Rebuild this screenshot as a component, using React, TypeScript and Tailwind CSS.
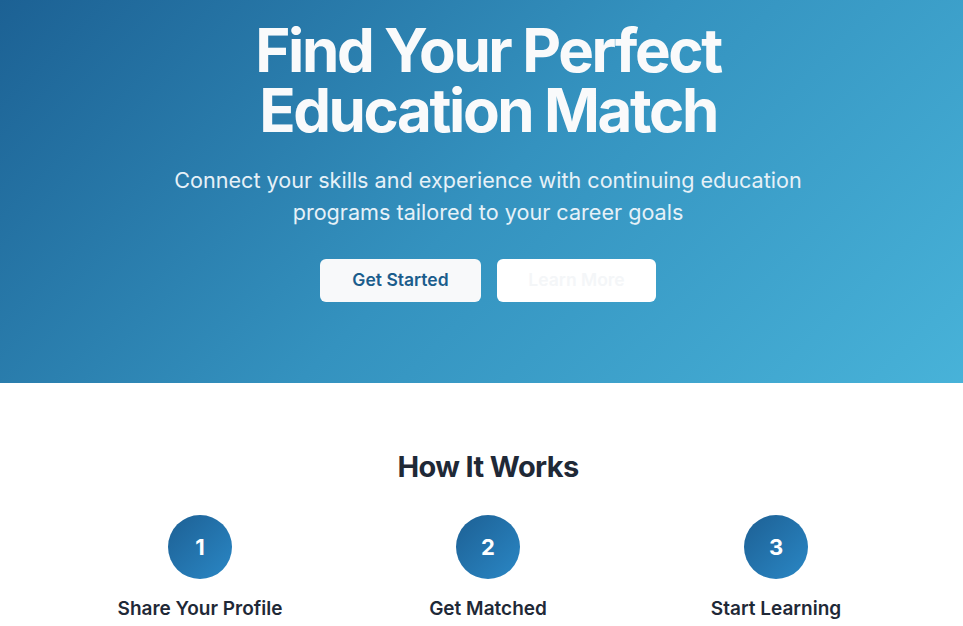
import React from "react";

const steps = [
  { n: "1", title: "Share Your Profile" },
  { n: "2", title: "Get Matched" },
  { n: "3", title: "Start Learning" },
];

export default function App() {
  return (
    <div className="w-full overflow-hidden bg-white" style={{ fontFamily: "Inter, 'Noto Sans', sans-serif" }}>
      <div className="w-[976px]">
        <section className="h-[383px] bg-[linear-gradient(135deg,#1c6194_0%,#3492bf_50%,#48b3d9_100%)] flex flex-col items-center pt-[20px]">
          <h1 className="text-[60px] leading-[60px] font-bold text-[#f9fafb] text-center tracking-[-2.4px]">
            Find Your Perfect
            <br />
            Education Match
          </h1>
          <p className="mt-6 text-[21.6px] leading-8 text-[#e6f1f8] text-center max-w-[680px]">
            Connect your skills and experience with continuing education programs tailored to your career goals
          </p>
          <div className="mt-[31px] flex gap-4">
            <button className="w-[161px] h-[43px] rounded-md bg-[#f8f9fa] text-[#1b5d8c] font-semibold text-[17.5px]">
              Get Started
            </button>
            <button className="w-[159px] h-[43px] rounded-md bg-white text-[#f4f6f8] font-semibold text-[17.5px]">
              Learn More
            </button>
          </div>
        </section>
        <section className="px-14 pt-[66px] pb-8">
          <h2 className="text-[29px] leading-9 font-bold text-[#1f2937] text-center tracking-[-0.6px]">How It Works</h2>
          <div className="mt-[30px] grid grid-cols-3">
            {steps.map((s) => (
              <div key={s.n} className="flex flex-col items-center">
                <div className="w-16 h-16 rounded-full bg-[linear-gradient(135deg,#1d6094,#2a87c5)] flex items-center justify-center text-white text-[22px] font-bold">
                  {s.n}
                </div>
                <div className="mt-4 text-[19px] leading-7 font-semibold text-[#1f2937]">{s.title}</div>
              </div>
            ))}
          </div>
        </section>
      </div>
    </div>
  );
}
